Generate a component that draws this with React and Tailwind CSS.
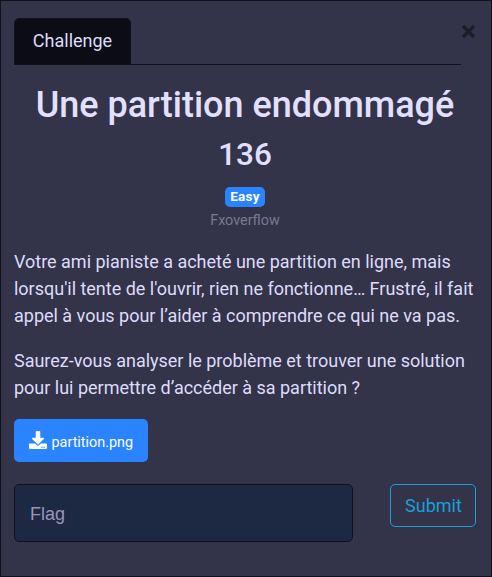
import { FaDownload } from "react-icons/fa";

export default function App() {
  return (
    <div className="h-[577px] w-[492px] overflow-hidden border border-[#12121d] bg-[#33334a] pl-[13px] pr-[15px] pt-[17px] font-['Roboto',sans-serif] text-[18px] leading-[27px] text-[#dedcfa] antialiased">
      <header className="flex items-start">
        <div className="flex h-[47px] w-[447px] shrink-0 border-b border-[#12121d]">
          <div className="flex h-[47px] w-[117px] items-center justify-center rounded-t-[5px] border border-[#12121d] bg-[#0c0c15] pb-[2px]">
            Challenge
          </div>
        </div>
        <button aria-label="Close" className="mt-[6px] flex h-[15px] w-[15px] shrink-0 items-center justify-center text-[#1d1d2a]">
          <svg className="shrink-0" width="15" height="15" viewBox="0 0 15 15" fill="none" stroke="currentColor" strokeWidth="3.4">
            <path d="M2 2 13 13M13 2 2 13" />
          </svg>
        </button>
      </header>
      <div className="text-center font-medium text-[#e3e0ff]">
        <h2 className="mt-[19px] whitespace-nowrap text-[36px] leading-[43px]">Une partition endommagé</h2>
        <h3 className="mt-[9px] text-[31.5px] leading-[38px]">136</h3>
      </div>
      <div className="mt-[13px] flex flex-col items-center">
        <span className="flex h-5 w-10 items-center justify-center rounded-[5px] bg-[#2a84ff] text-[13.5px] font-bold leading-none tracking-[0.3px] text-white">Easy</span>
        <span className="mt-[3px] text-[14.4px] leading-[22px] text-[#797891]">Fxoverflow</span>
      </div>
      <div className="mt-[16px] whitespace-nowrap tracking-[-0.01px]">
        <p>Votre ami pianiste a acheté une partition en ligne, mais<br />lorsqu'il tente de l'ouvrir, rien ne fonctionne… Frustré, il fait<br />appel à vous pour l’aider à comprendre ce qui ne va pas.</p>
        <p className="mt-[18px]">Saurez-vous analyser le problème et trouver une solution<br />pour lui permettre d’accéder à sa partition ?</p>
      </div>
      <a className="mt-[18px] flex h-[43px] w-[134px] items-center rounded-[5px] bg-[#2a84ff] pl-[15px] text-white">
        <FaDownload className="mb-[1px] h-[18px] w-[18px] shrink-0" />
        <span className="ml-[4.5px] mt-[3px] text-[14.4px]">partition.png</span>
      </a>
      <div className="mt-[22px] flex items-start justify-between">
        <input placeholder="Flag" className="h-[58px] w-[339px] rounded-[5px] border border-[#12121d] bg-[#1d2842] px-[15px] pt-[2px] font-['Liberation_Sans',sans-serif] text-[18px] placeholder:text-[#9896b8]" />
        <button className="h-[43px] w-[86px] rounded-[5px] border border-[#199fd8] pl-[1px] text-[18px] text-[#199fd8]">Submit</button>
      </div>
    </div>
  );
}
